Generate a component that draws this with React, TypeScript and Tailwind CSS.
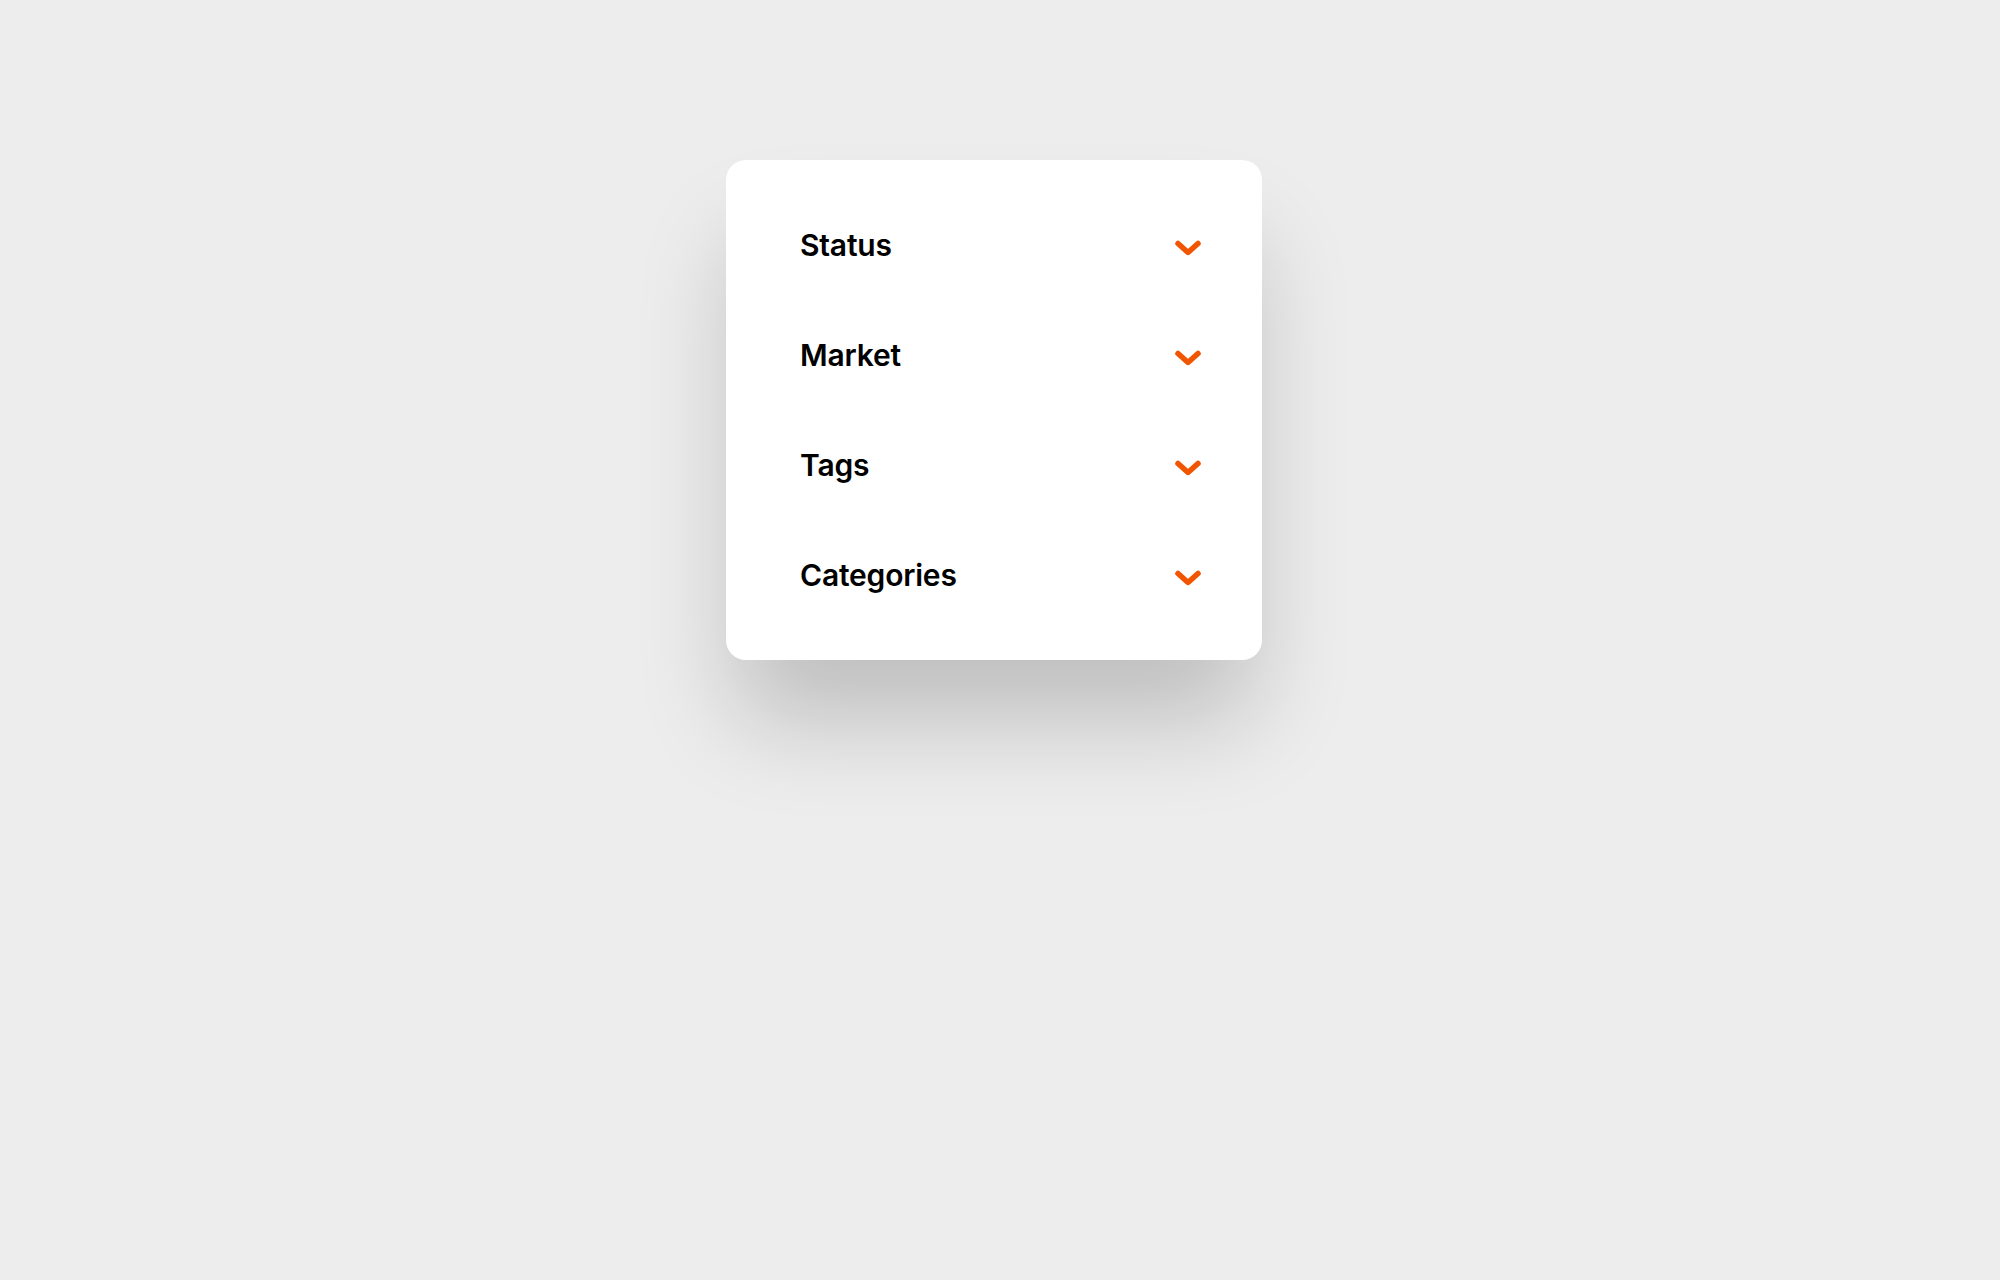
import React from "react";

const filters = ["Status", "Market", "Tags", "Categories"];

function Chevron() {
  return (
    <svg width="28" height="18" viewBox="0 0 28 18" fill="none" className="mt-[5px] shrink-0">
      <path
        d="M4 4.5 L14 13.5 L24 4.5"
        stroke="#f25500"
        strokeWidth="5.5"
        strokeLinecap="round"
        strokeLinejoin="round"
      />
    </svg>
  );
}

export default function App() {
  return (
    <div className="min-h-screen w-full bg-[#ededed] pt-[160px]" style={{ fontFamily: "Inter, 'Noto Sans', sans-serif" }}>
      <div className="ml-[726px] w-[536px] rounded-[20px] bg-white py-[30px] pl-[74px] pr-[60px] shadow-[0_70px_100px_-10px_rgba(0,0,0,0.2)]">
        {filters.map((f) => (
          <button
            key={f}
            type="button"
            className="flex h-[110px] w-full items-center justify-between text-left"
          >
            <span className="text-[30px] font-semibold leading-none tracking-[-0.2px] text-black">{f}</span>
            <Chevron />
          </button>
        ))}
      </div>
    </div>
  );
}
